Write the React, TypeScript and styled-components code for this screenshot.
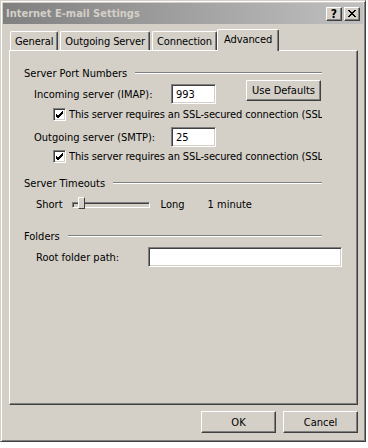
import React from "react";
import styled, { createGlobalStyle } from "styled-components";

const Global = createGlobalStyle`
  html, body { margin: 0; padding: 0; background: #ffffff; }
  body { font-family: "DejaVu Sans Condensed", "Liberation Sans", Arial, sans-serif; font-size: 11px; color: #000; }
  * { box-sizing: border-box; }
`;

const Win = styled.div`
  width: 366px;
  height: 442px;
  background: #d4d0c8;
  border-top: 1px solid #d4d0c8;
  border-left: 1px solid #d4d0c8;
  border-right: 1px solid #404040;
  border-bottom: 1px solid #404040;
  box-shadow: inset 1px 1px 0 #ffffff, inset -1px -1px 0 #808080;
  padding: 2px;
  display: flex;
  flex-direction: column;
`;

const TitleBar = styled.div`
  height: 21px;
  background: linear-gradient(to right, #808080, #c0c0c0);
  display: flex;
  align-items: center;
  padding: 0 3px 0 3px;
  justify-content: space-between;
`;

const Title = styled.span`
  font-weight: bold;
  font-size: 11px;
  color: #d4d0c8;
`;

const TitleButtons = styled.div`
  display: flex;
  gap: 2px;
`;

const TitleBtn = styled.div`
  width: 16px;
  height: 14px;
  background: #d4d0c8;
  border-top: 1px solid #ffffff;
  border-left: 1px solid #ffffff;
  border-right: 1px solid #404040;
  border-bottom: 1px solid #404040;
  box-shadow: inset -1px -1px 0 #808080;
  display: flex;
  align-items: center;
  justify-content: center;
  font-weight: bold;
  font-size: 12px;
  line-height: 1;
`;

const Body = styled.div`
  flex: 1;
  display: flex;
  flex-direction: column;
  padding: 4px 6px 0 6px;
`;

const TabStrip = styled.div`
  display: flex;
  align-items: flex-end;
  height: 22px;
  position: relative;
  z-index: 1;
`;

const Tab = styled.div<{ $active?: boolean }>`
  height: ${(p) => (p.$active ? "22px" : "19px")};
  padding: 0 ${(p) => (p.$active ? "6px" : "4px")};
  margin: 0 ${(p) => (p.$active ? "-1px" : "1px")} ${(p) => (p.$active ? "-1px" : "0")};
  background: #d4d0c8;
  border-top: 1px solid #ffffff;
  border-left: 1px solid #ffffff;
  border-right: 1px solid #404040;
  box-shadow: inset -1px 0 0 #808080;
  border-radius: 2px 2px 0 0;
  display: flex;
  align-items: ${(p) => (p.$active ? "flex-start" : "center")};
  padding-top: ${(p) => (p.$active ? "3px" : "1px")};
  white-space: nowrap;
  letter-spacing: -0.1px;
`;

const Panel = styled.div`
  width: 349px;
  height: 355px;
  border-top: 1px solid #ffffff;
  border-left: 1px solid #ffffff;
  border-right: 1px solid #404040;
  border-bottom: 1px solid #404040;
  box-shadow: inset -1px -1px 0 #808080;
  padding: 14px 35px 0 14px;
  display: flex;
  flex-direction: column;
`;

const GroupHeader = styled.div<{ $top: number }>`
  display: flex;
  align-items: center;
  gap: 8px;
  margin-top: ${(p) => p.$top}px;
  height: 14px;
`;

const Rule = styled.div`
  flex: 1;
  height: 2px;
  border-top: 1px solid #808080;
  border-bottom: 1px solid #ffffff;
`;

const Row = styled.div<{ $top: number; $indent: number }>`
  display: flex;
  align-items: center;
  margin-top: ${(p) => p.$top}px;
  padding-left: ${(p) => p.$indent}px;
  white-space: nowrap;
`;

const Label = styled.span<{ $w?: number }>`
  width: ${(p) => (p.$w ? `${p.$w}px` : "auto")};
  flex-shrink: 0;
`;

const Field = styled.div<{ $w: number }>`
  width: ${(p) => p.$w}px;
  height: 20px;
  background: #ffffff;
  border-top: 1px solid #808080;
  border-left: 1px solid #808080;
  border-right: 1px solid #ffffff;
  border-bottom: 1px solid #ffffff;
  box-shadow: inset 1px 1px 0 #404040, inset -1px -1px 0 #d4d0c8;
  padding: 3px 0 0 4px;
  flex-shrink: 0;
`;

const Button = styled.div<{ $w: number; $h: number }>`
  width: ${(p) => p.$w}px;
  height: ${(p) => p.$h}px;
  background: #d4d0c8;
  border-top: 1px solid #ffffff;
  border-left: 1px solid #ffffff;
  border-right: 1px solid #404040;
  border-bottom: 1px solid #404040;
  box-shadow: inset -1px -1px 0 #808080;
  display: flex;
  align-items: center;
  justify-content: center;
  flex-shrink: 0;
`;

const DefaultsBtn = styled(Button)`
  margin-left: 30px;
  margin-top: -8px;
`;

const CheckBox = styled.div`
  width: 13px;
  height: 13px;
  background: #ffffff;
  border-top: 1px solid #808080;
  border-left: 1px solid #808080;
  border-right: 1px solid #ffffff;
  border-bottom: 1px solid #ffffff;
  box-shadow: inset 1px 1px 0 #404040, inset -1px -1px 0 #d4d0c8;
  display: flex;
  align-items: center;
  justify-content: center;
  margin-right: 3px;
  flex-shrink: 0;
`;

const Clip = styled.span`
  overflow: hidden;
  width: 257px;
  display: inline-block;
  letter-spacing: -0.12px;
`;

const SliderTrack = styled.div`
  width: 78px;
  height: 14px;
  position: relative;
  margin: 0 11px 0 9px;
  flex-shrink: 0;
  &::before {
    content: "";
    position: absolute;
    left: 0;
    right: 0;
    top: 5px;
    height: 4px;
    border-top: 1px solid #808080;
    border-left: 1px solid #808080;
    border-bottom: 1px solid #ffffff;
    border-right: 1px solid #ffffff;
    box-shadow: inset 1px 1px 0 #404040;
  }
`;

const Thumb = styled.div`
  position: absolute;
  left: 6px;
  top: 0;
  width: 7px;
  height: 12px;
  background: #d4d0c8;
  border-top: 1px solid #ffffff;
  border-left: 1px solid #ffffff;
  border-right: 1px solid #404040;
  border-bottom: 1px solid #404040;
`;

const Footer = styled.div`
  display: flex;
  justify-content: flex-end;
  gap: 7px;
  padding: 6px 0 0 0;
  width: 349px;
`;

const Check = () => (
  <svg width="9" height="9" viewBox="0 0 9 9">
    <path d="M1 4 L3 6 L8 1 M1 5 L3 7 L8 2 M1 6 L3 8 L8 3" stroke="#000" strokeWidth="1" fill="none" />
  </svg>
);

export default function App() {
  return (
    <>
      <Global />
      <Win>
        <TitleBar>
          <Title>Internet E-mail Settings</Title>
          <TitleButtons>
            <TitleBtn>?</TitleBtn>
            <TitleBtn>
              <svg width="8" height="7" viewBox="0 0 8 7">
                <path d="M0 0 L7 7 M1 0 L8 7 M7 0 L0 7 M8 0 L1 7" stroke="#000" strokeWidth="1" fill="none" />
              </svg>
            </TitleBtn>
          </TitleButtons>
        </TitleBar>
        <Body>
          <TabStrip>
            <Tab>General</Tab>
            <Tab>Outgoing Server</Tab>
            <Tab>Connection</Tab>
            <Tab $active>Advanced</Tab>
          </TabStrip>
          <Panel>
            <GroupHeader $top={1}>
              <span>Server Port Numbers</span>
              <Rule />
            </GroupHeader>
            <Row $top={4} $indent={10}>
              <Label $w={137}>Incoming server (IMAP):</Label>
              <Field $w={45}>993</Field>
              <DefaultsBtn $w={75} $h={21}>Use Defaults</DefaultsBtn>
            </Row>
            <Row $top={4} $indent={29}>
              <CheckBox><Check /></CheckBox>
              <Clip>This server requires an SSL-secured connection (SSL)</Clip>
            </Row>
            <Row $top={6} $indent={10}>
              <Label $w={137}>Outgoing server (SMTP):</Label>
              <Field $w={45}>25</Field>
            </Row>
            <Row $top={3} $indent={29}>
              <CheckBox><Check /></CheckBox>
              <Clip>This server requires an SSL-secured connection (SSL)</Clip>
            </Row>
            <GroupHeader $top={13}>
              <span>Server Timeouts</span>
              <Rule />
            </GroupHeader>
            <Row $top={7} $indent={12}>
              <span>Short</span>
              <SliderTrack><Thumb /></SliderTrack>
              <Label $w={47}>Long</Label>
              <span>1 minute</span>
            </Row>
            <GroupHeader $top={18}>
              <span>Folders</span>
              <Rule />
            </GroupHeader>
            <Row $top={4} $indent={12}>
              <Label $w={112}>Root folder path:</Label>
              <Field $w={194} style={{ marginRight: -40 }} />
            </Row>
          </Panel>
          <Footer>
            <Button $w={75} $h={22}>OK</Button>
            <Button $w={75} $h={22}>Cancel</Button>
          </Footer>
        </Body>
      </Win>
    </>
  );
}
